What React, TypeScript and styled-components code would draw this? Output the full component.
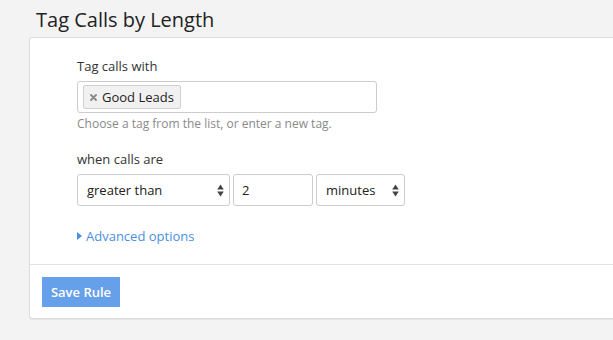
import React from 'react';
import styled, { createGlobalStyle } from 'styled-components';

const COLORS = {
  page: '#f3f3f3',
  text: '#333333',
  muted: '#8a8a8a',
  border: '#cccccc',
  link: '#4a90e2',
  primary: '#66a0ea',
};

const GlobalStyle = createGlobalStyle`
  html, body {
    margin: 0;
    padding: 0;
    background: ${COLORS.page};
    font-family: "Open Sans", "Liberation Sans", sans-serif;
    color: ${COLORS.text};
  }
`;

const App = () => {
  return (
    <>
      <GlobalStyle />
      <Page>
        <Title>Tag Calls by Length</Title>
        <Card>
          <Body>
            <Field>
              <Label>Tag calls with</Label>
              <TagInput>
                <Chip>
                  <RemoveIcon />
                  Good Leads
                </Chip>
              </TagInput>
              <Help>Choose a tag from the list, or enter a new tag.</Help>
            </Field>

            <Field>
              <Label>when calls are</Label>
              <Controls>
                <Select width={153}>
                  greater than
                  <Spinner />
                </Select>
                <NumberBox>2</NumberBox>
                <Select width={89}>
                  minutes
                  <Spinner />
                </Select>
              </Controls>
            </Field>

            <Advanced>
              <Caret />
              Advanced options
            </Advanced>
          </Body>
          <Footer>
            <SaveButton>Save Rule</SaveButton>
          </Footer>
        </Card>
      </Page>
    </>
  );
};

// little up/down arrows drawn at the right of a native-looking select
const Spinner = () => (
  <SpinnerSvg width="7" height="13" viewBox="0 0 7 13">
    <path d="M3.5 0.5 L6.8 5.5 L0.2 5.5 Z" fill="#444" />
    <path d="M3.5 12.5 L6.8 7.5 L0.2 7.5 Z" fill="#444" />
  </SpinnerSvg>
);

const RemoveIcon = () => (
  <svg width="7" height="7" viewBox="0 0 7 7">
    <path d="M1 1 L6 6 M6 1 L1 6" stroke="#888" strokeWidth="1.8" strokeLinecap="round" />
  </svg>
);

const Caret = () => (
  <svg width="5" height="8" viewBox="0 0 5 8">
    <path d="M0 0 L5 4 L0 8 Z" fill={COLORS.link} />
  </svg>
);

const Page = styled.div`
  padding: 8px 0 0 29px;
  height: 340px;
  box-sizing: border-box;
`;

const Title = styled.h1`
  margin: 0 0 6px 7px;
  font-size: 20px;
  font-weight: 400;
  line-height: 23px;
  color: #222;
`;

const Card = styled.section`
  background: #fff;
  border: 1px solid #dcdcdc;
  border-right: none;
  border-radius: 3px 0 0 3px;
  box-shadow: 0 1px 1px rgba(0, 0, 0, 0.06);
`;

const Body = styled.div`
  padding: 19px 0 19px 47px;
  border-bottom: 1px solid #e2e2e2;
`;

const Field = styled.div`
  & + & {
    margin-top: 18px;
  }
`;

const Label = styled.div`
  font-size: 13px;
  line-height: 18px;
  margin-bottom: 6px;
`;

const TagInput = styled.div`
  width: 300px;
  height: 32px;
  box-sizing: border-box;
  border: 1px solid ${COLORS.border};
  border-radius: 3px;
  padding: 3px 5px;
  display: flex;
  align-items: center;
`;

const Chip = styled.span`
  display: inline-flex;
  align-items: center;
  gap: 5px;
  height: 24px;
  box-sizing: border-box;
  padding: 0 6px 0 6px;
  background: #f1f1f1;
  border: 1px solid #cfcfcf;
  border-radius: 2px;
  font-size: 13px;
  color: #222;
`;

const Help = styled.div`
  margin-top: 2px;
  font-size: 12px;
  line-height: 17px;
  color: ${COLORS.muted};
`;

const Controls = styled.div`
  display: flex;
  gap: 3px;
`;

const Box = styled.div`
  height: 32px;
  box-sizing: border-box;
  border: 1px solid ${COLORS.border};
  border-radius: 3px;
  display: flex;
  align-items: center;
  padding: 0 9px;
  font-size: 13px;
  color: #222;
`;

const Select = styled(Box)<{ width: number }>`
  width: ${(p) => p.width}px;
  justify-content: space-between;
  padding-right: 5px;
`;

const NumberBox = styled(Box)`
  width: 80px;
  padding-left: 8px;
`;

const SpinnerSvg = styled.svg`
  display: block;
`;

const Advanced = styled.a`
  display: inline-flex;
  align-items: center;
  gap: 4px;
  margin-top: 21px;
  font-size: 13px;
  line-height: 18px;
  color: ${COLORS.link};
  cursor: pointer;
`;

const Footer = styled.div`
  padding: 12px 12px 11px;
`;

const SaveButton = styled.button`
  width: 78px;
  height: 30px;
  border: none;
  border-radius: 0;
  background: ${COLORS.primary};
  color: #fff;
  font-family: inherit;
  font-size: 13px;
  font-weight: 600;
  padding: 0;
`;

export default App;
